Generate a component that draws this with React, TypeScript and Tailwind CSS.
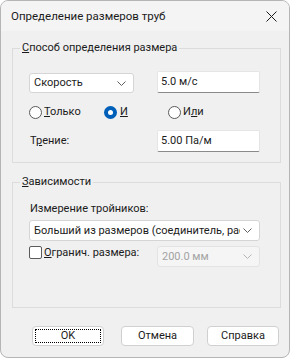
import React from 'react';

const font = { fontFamily: 'Roboto, "Noto Sans", "Liberation Sans", sans-serif' };

function Chevron({ disabled = false }: { disabled?: boolean }) {
  return (
    <svg width="9" height="5" viewBox="0 0 9 5" className="shrink-0">
      <path d="M0.5 0.5 L4.5 4.5 L8.5 0.5" fill="none" stroke={disabled ? '#b4b4b4' : '#5f5f5f'} strokeWidth="1" />
    </svg>
  );
}

function Combo({ value, className = '', disabled = false }: { value: string; className?: string; disabled?: boolean }) {
  return (
    <div
      className={`flex items-center justify-between gap-[3px] pl-[4px] pr-[7px] rounded-[3px] border ${
        disabled ? 'bg-[#f5f5f5] border-[#e3e3e3] text-[#a3a3a3]' : 'bg-white border-[#d5d5d5] text-[#1b1b1b]'
      } ${className}`}
    >
      <span className="whitespace-nowrap overflow-hidden">{value}</span>
      <Chevron disabled={disabled} />
    </div>
  );
}

function Edit({ value }: { value: string }) {
  return (
    <div className="w-[103px] h-[22px] bg-white border border-[#e5e5e5] border-b-[#8a8a8a] rounded-[2px] flex items-center pl-[3px] text-[#1b1b1b]">
      {value}
    </div>
  );
}

function Radio({ checked = false }: { checked?: boolean }) {
  if (checked) {
    return (
      <span className="w-[13px] h-[13px] rounded-full bg-[#005fb8] flex items-center justify-center shrink-0">
        <span className="w-[5px] h-[5px] rounded-full bg-white" />
      </span>
    );
  }
  return <span className="w-[13px] h-[13px] rounded-full border border-[#5a5a5a] bg-white shrink-0" />;
}

export default function App() {
  return (
    <div className="w-[292px] h-[360px] bg-white text-[11px] leading-[16px] text-[#1b1b1b]" style={font}>
      <div className="w-[290px] h-[358px] border border-[#b5b5b5] rounded-[8px] bg-[#f0f0f0] overflow-hidden flex flex-col">
        {/* Title bar */}
        <div className="h-[30px] bg-[#f4f4f4] flex items-center justify-between pl-[10px] pr-[12px]">
          <span className="text-[11.5px]">Определение размеров труб</span>
          <svg width="11" height="11" viewBox="0 0 11 11">
            <path d="M0.5 0.5 L10.5 10.5 M10.5 0.5 L0.5 10.5" stroke="#1b1b1b" strokeWidth="1" />
          </svg>
        </div>

        <div className="pt-[9px] pl-[11px]">
          {/* Group 1 */}
          <fieldset className="w-[269px] border border-[#dcdcdc] pl-[16px] pb-[10px]">
            <legend className="ml-[-9px] px-[2px]">
              <u>С</u>пособ определения размера
            </legend>
            <div className="flex items-end mt-[15px]">
              <Combo value="Скорость" className="w-[105px] h-[20px]" />
              <div className="ml-[23px]">
                <Edit value="5.0 м/с" />
              </div>
            </div>
            <div className="flex items-center mt-[11px] h-[16px]">
              <div className="w-[75px] flex items-center gap-[2px]">
                <Radio />
                <span>
                  <u>Т</u>олько
                </span>
              </div>
              <div className="w-[64px] flex items-center gap-[3px]">
                <Radio checked />
                <span>
                  <u>И</u>
                </span>
              </div>
              <div className="flex items-center gap-[2px]">
                <Radio />
                <span>
                  И<u>л</u>и
                </span>
              </div>
            </div>
            <div className="flex items-center mt-[10px]">
              <span className="w-[128px] pl-[1px]">
                Т<u>р</u>ение:
              </span>
              <Edit value="5.00 Па/м" />
            </div>
          </fieldset>

          {/* Group 2 */}
          <fieldset className="w-[269px] mt-[11px] border border-[#dcdcdc] pl-[16px] pb-[40px]">
            <legend className="ml-[-9px] px-[2px]">
              <u>З</u>ависимости
            </legend>
            <div className="mt-[11px] pl-[1px]">Измерение тройников:</div>
            <Combo value="Больший из размеров (соединитель, рас" className="w-[231px] h-[21px] mt-[3px]" />
            <div className="flex items-start mt-[5px]">
              <div className="w-[128px] h-[13px] flex items-center gap-[2px]">
                <span className="w-[13px] h-[13px] rounded-[2px] border border-[#5a5a5a] bg-white shrink-0" />
                <span>
                  <u>О</u>гранич. размера:
                </span>
              </div>
              <Combo value="200.0 мм" className="w-[103px] h-[21px]" disabled />
            </div>
          </fieldset>
        </div>

        {/* Buttons */}
        <div className="flex mt-[18px] pl-[31px]">
          <button className="w-[72px] h-[20px] bg-white border border-[#d0d0d0] rounded-[4px] p-[2px]">
            <span className="flex w-full h-full items-center justify-center border border-dotted border-black">OK</span>
          </button>
          <button className="ml-[17px] w-[73px] h-[20px] bg-white border border-[#d0d0d0] rounded-[4px]">Отмена</button>
          <button className="ml-[13px] w-[72px] h-[20px] bg-white border border-[#d0d0d0] rounded-[4px]">Справка</button>
        </div>
      </div>
    </div>
  );
}
